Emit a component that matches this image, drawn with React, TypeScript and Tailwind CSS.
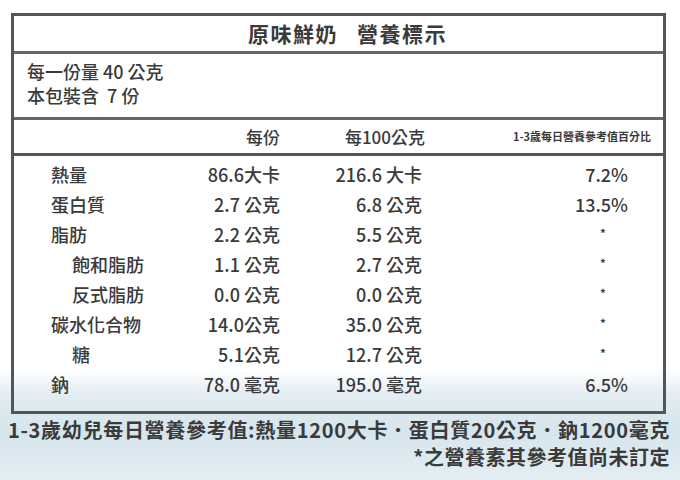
import React from 'react';

type Row = {
  name: string;
  indent?: boolean;
  perServing: string;
  per100: string;
  daily: string;
};

const rows: Row[] = [
  { name: '熱量', perServing: '86.6大卡', per100: '216.6 大卡', daily: '7.2%' },
  { name: '蛋白質', perServing: '2.7 公克', per100: '6.8 公克', daily: '13.5%' },
  { name: '脂肪', perServing: '2.2 公克', per100: '5.5 公克', daily: '*' },
  { name: '飽和脂肪', indent: true, perServing: '1.1 公克', per100: '2.7 公克', daily: '*' },
  { name: '反式脂肪', indent: true, perServing: '0.0 公克', per100: '0.0 公克', daily: '*' },
  { name: '碳水化合物', perServing: '14.0公克', per100: '35.0 公克', daily: '*' },
  { name: '糖', indent: true, perServing: '5.1公克', per100: '12.7 公克', daily: '*' },
  { name: '鈉', perServing: '78.0 毫克', per100: '195.0 毫克', daily: '6.5%' },
];

const font = { fontFamily: '"Noto Sans CJK TC", "Noto Sans", sans-serif' };

export default function App() {
  return (
    <div
      className="w-[680px] h-[480px] overflow-hidden text-[#3a3a3a] bg-[linear-gradient(to_bottom,#ffffff_0%,#ffffff_77%,#e3edf2_82%,#d6e5ec_90%,#e4eef3_100%)]"
      style={font}
    >
      <div className="ml-[11px] mt-[13px] w-[655px] border-[3px] border-[#555]">
        <div className="h-[35px] flex items-center justify-center pl-[18px] text-[21px] font-bold tracking-[1.5px]">
          原味鮮奶&nbsp;&nbsp;&nbsp;營養標示
        </div>
        <div className="h-[3px] bg-[#666]" />
        <div className="h-[63px] pl-[13px] pt-[5px] text-[18px] leading-[24px] font-medium">
          <div>每一份量 40 公克</div>
          <div>本包裝含&nbsp;&nbsp;7 份</div>
        </div>
        <div className="h-[3px] bg-[#666]" />
        <div className="h-[33px] flex items-center font-medium">
          <div className="w-[266px] text-right text-[17px]">每份</div>
          <div className="w-[145px] text-right text-[17px]">每100公克</div>
          <div className="w-[226px] text-right text-[11px] font-bold">1-3歲每日營養參考值百分比</div>
        </div>
        <div className="h-[3px] bg-[#555]" />
        <div className="pt-[3px] pb-[12px] text-[18px] font-medium">
          {rows.map((r) => (
            <div key={r.name} className="flex items-center h-[30px]">
              <div className={`w-[186px] ${r.indent ? 'pl-[58px]' : 'pl-[37px]'}`}>{r.name}</div>
              <div className="w-[80px] text-right whitespace-nowrap">{r.perServing}</div>
              <div className="w-[142px] text-right whitespace-nowrap">{r.per100}</div>
              <div
                className={`w-[206px] text-right ${r.daily === '*' ? 'pr-[22px] text-[13px]' : ''}`}
              >
                {r.daily}
              </div>
            </div>
          ))}
        </div>
      </div>
      <div className="pl-[8px] mt-[4px] text-[20px] font-bold leading-[24px] whitespace-nowrap tracking-[0.7px]">
        1-3歲幼兒每日營養參考值:熱量1200大卡．蛋白質20公克．鈉1200毫克
      </div>
      <div className="mt-[3px] pr-[10px] text-right text-[20px] font-bold leading-[24px] tracking-[0.5px]">
        *之營養素其參考值尚未訂定
      </div>
    </div>
  );
}
